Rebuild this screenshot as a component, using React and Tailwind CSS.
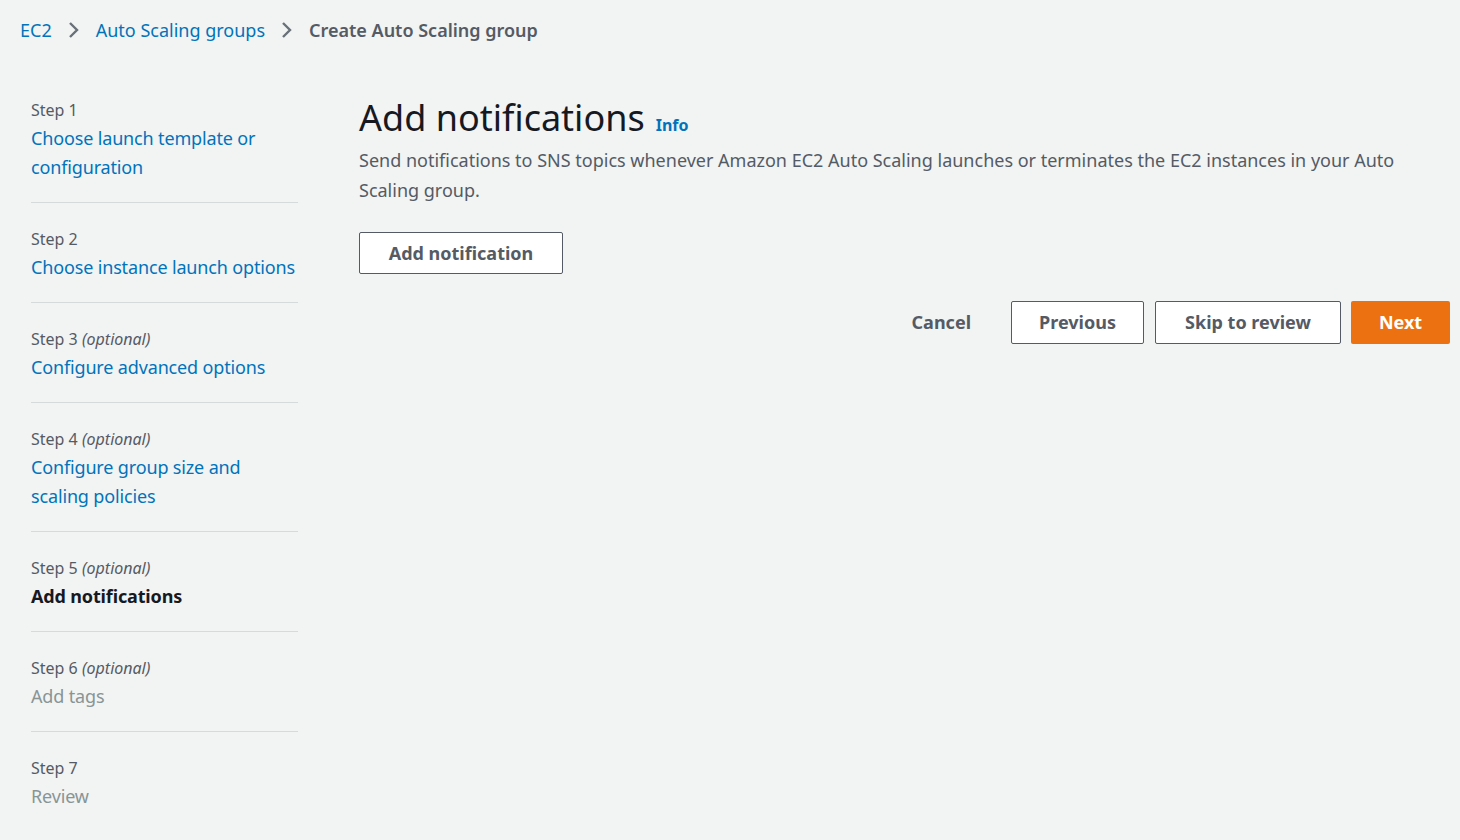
import React from 'react';

const steps = [
  { n: 1, title: 'Choose launch template or configuration', state: 'link' },
  { n: 2, title: 'Choose instance launch options', state: 'link' },
  { n: 3, optional: true, title: 'Configure advanced options', state: 'link' },
  { n: 4, optional: true, title: 'Configure group size and scaling policies', state: 'link' },
  { n: 5, optional: true, title: 'Add notifications', state: 'active' },
  { n: 6, optional: true, title: 'Add tags', state: 'disabled' },
  { n: 7, title: 'Review', state: 'disabled' },
];

function Chevron() {
  return (
    <svg width="14" height="20" viewBox="0 0 14 20" className="mx-[15px]">
      <path d="M3 3l7 7-7 7" fill="none" stroke="#687078" strokeWidth="2.4" />
    </svg>
  );
}

function StepItem({ step, last }) {
  const titleCls =
    step.state === 'active'
      ? 'text-[#16191f] font-bold'
      : step.state === 'disabled'
      ? 'text-[#879596]'
      : 'text-[#0073bb]';
  return (
    <li className={`pt-[22px] pb-[20px] ${last ? '' : 'border-b border-[#d5dbdb]'}`}>
      <div className="text-[16px] leading-[28px] text-[#545b64]">
        Step {step.n}
        {step.optional && <i> (optional)</i>}
      </div>
      <div className={`text-[18px] leading-[29px] tracking-[-0.15px] ${titleCls}`}>{step.title}</div>
    </li>
  );
}

export default function App() {
  return (
    <div
      className="min-h-[840px] bg-[#f2f3f3] text-[#16191f]"
      style={{ fontFamily: '"Noto Sans", "Open Sans", Arial, sans-serif' }}
    >
      <nav className="flex items-center px-[20px] pt-[15px] h-[45px] text-[18px]">
        <span className="text-[#0073bb]">EC2</span>
        <Chevron />
        <span className="text-[#0073bb]">Auto Scaling groups</span>
        <Chevron />
        <span className="text-[#545b64] font-semibold">Create Auto Scaling group</span>
      </nav>

      <div className="flex pt-[51px]">
        <ul className="w-[267px] ml-[31px] shrink-0 -mt-[22px]">
          {steps.map((s, i) => (
            <StepItem key={s.n} step={s} last={i === steps.length - 1} />
          ))}
        </ul>

        <main className="flex-1 ml-[61px] mr-[10px]">
          <div className="flex items-baseline gap-[11px]">
            <h1 className="text-[36px] leading-[44px] font-normal text-[#16191f]">Add notifications</h1>
            <span className="text-[16px] font-bold text-[#0073bb]">Info</span>
          </div>
          <p className="mt-[5px] text-[18px] leading-[30px] text-[#545b64] max-w-[1060px]">
            Send notifications to SNS topics whenever Amazon EC2 Auto Scaling launches or terminates the EC2
            instances in your Auto Scaling group.
          </p>
          <button className="mt-[27px] h-[42px] px-[28px] w-[204px] border border-[#545b64] rounded-[2px] bg-white text-[18px] font-bold text-[#545b64]">
            Add notification
          </button>

          <div className="flex justify-end items-center mt-[27px] gap-[11px]">
            <button className="h-[43px] px-[20px] mr-[9px] text-[18px] font-bold text-[#545b64]">Cancel</button>
            <button className="h-[43px] w-[133px] border border-[#545b64] rounded-[2px] bg-white text-[18px] font-bold text-[#545b64]">
              Previous
            </button>
            <button className="h-[43px] w-[186px] mr-[-1px] border border-[#545b64] rounded-[2px] bg-white text-[18px] font-bold text-[#545b64]">
              Skip to review
            </button>
            <button className="h-[43px] w-[99px] rounded-[2px] bg-[#ec7211] text-[18px] font-bold text-white">
              Next
            </button>
          </div>
        </main>
      </div>
    </div>
  );
}
